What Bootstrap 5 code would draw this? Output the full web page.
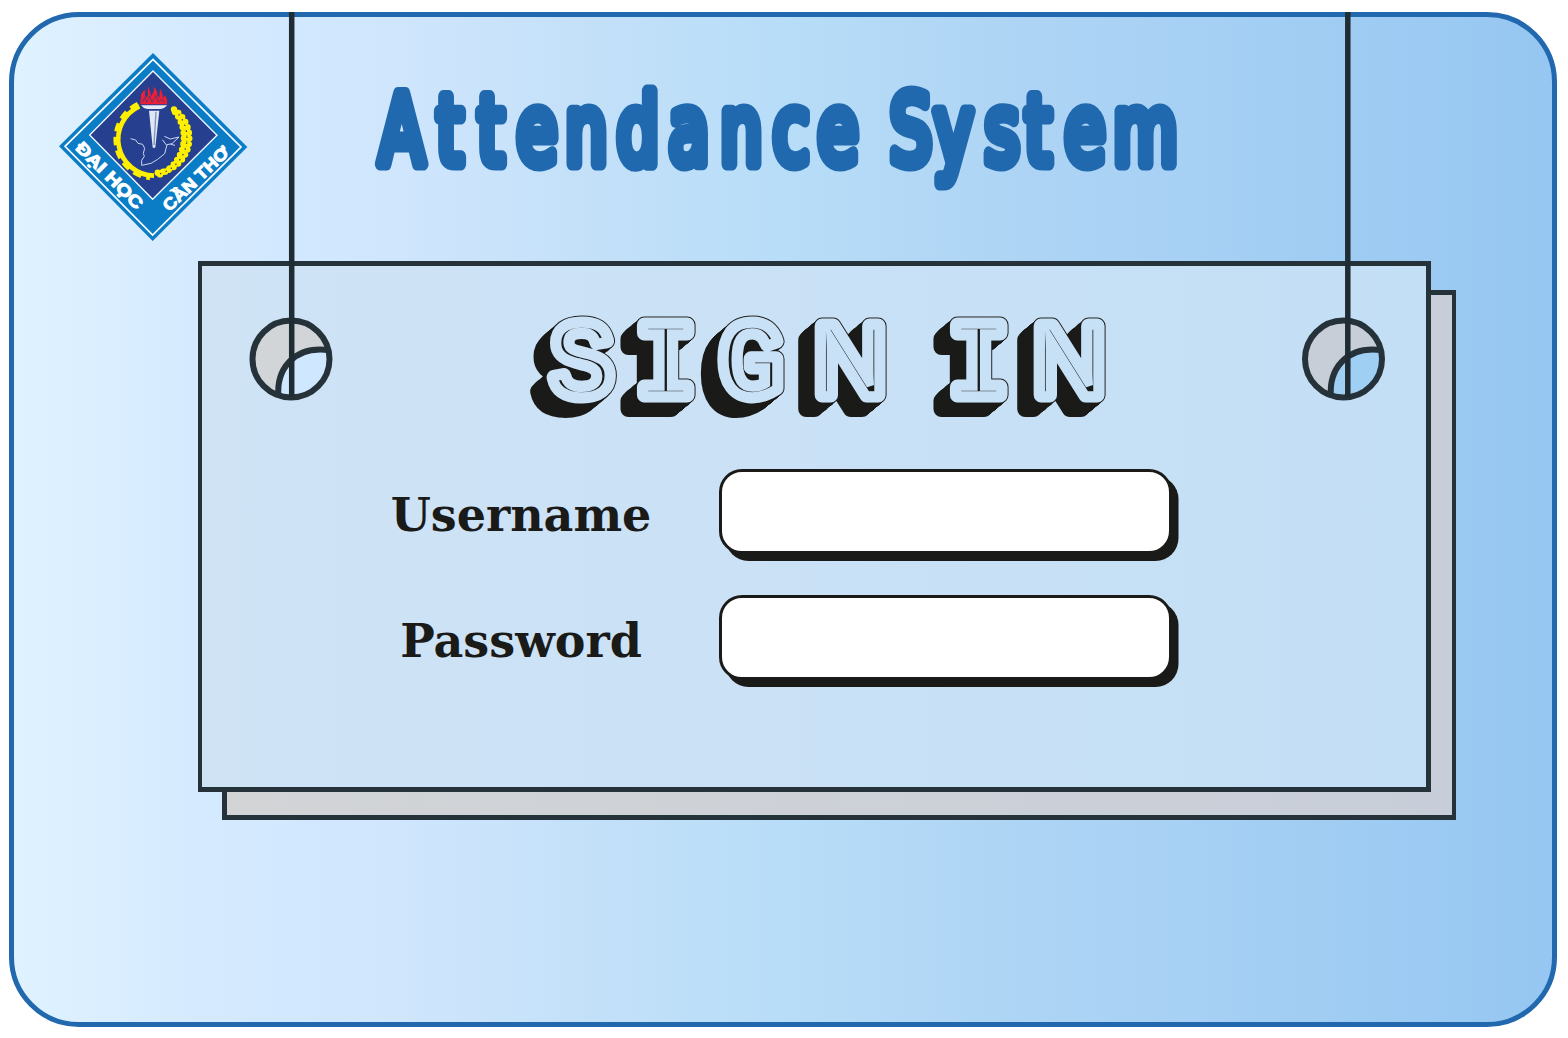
<!DOCTYPE html>
<html lang="en">
<head>
<meta charset="utf-8">
<meta name="viewport" content="width=device-width, initial-scale=1">
<title>Attendance System</title>
<link href="https://cdn.jsdelivr.net/npm/bootstrap@5.3.0/dist/css/bootstrap.min.css" rel="stylesheet">
<style>
  body { background: #fff; overflow: hidden; }
  .screen { width: 1568px; height: 1038px; padding: 12px 11px 11px 9px; }
  .stage {
    height: 1015px; border: 5px solid #2168ae; border-radius: 70px;
    background: linear-gradient(90deg, #dff2ff 0%, #d5eaff 12%, #cfe6fd 25%, #c3e0f9 38%, #b8ddf8 50%, #afd5f5 64%, #a6d0f4 77%, #9ccaf2 92%, #95c7f2 100%);
  }
  .brand-row { height: 244px; }
  .logo { width: 205px; height: 205px; margin: 28px 0 0 36px; }
  .title-art { width: 860px; height: 150px; margin: 53px 0 0 95px; overflow: visible; }
  .board { width: 1233px; height: 531px; margin-left: 184px; padding: 5px 5px 5px 4px; isolation: isolate; }
  .board::before {
    content: ""; position: absolute; z-index: -2; left: 24px; top: 29px; width: 1234px; height: 530px;
    border: 5px solid #26323a; border-right-width: 4px;
    background: linear-gradient(90deg, #d2d4d6, #c8ced9);
  }
  .board::after {
    content: ""; position: absolute; z-index: -1; inset: 0;
    border: 5px solid #26323a; border-left-width: 4px;
    background: linear-gradient(90deg, #cfe3f5, #cae1f6 45%, #c3dff5);
  }
  .ropes { position: absolute; left: 0; top: 0; pointer-events: none; }
  .sign-art { width: 590px; height: 110px; margin: 44px 0 0 324px; overflow: visible; }
  .login-form { margin: 49px 0 0 158px; gap: 41px; }
  .login-form .field-row { height: 85px; gap: 37px; }
  .login-form label { width: 322px; padding-top: 6px; text-align: center; font: bold 46px/1 "DejaVu Serif", serif; color: #1a1a19; }
  .login-form .form-control {
    width: 453px; height: 85px; border: 3px solid #1a1a19; border-radius: 23px;
    background: #fff; box-shadow: 6.5px 7px 0 #1a1a19; font-size: 32px;
  }
</style>
</head>
<body>
<main class="screen position-relative">
  <section class="stage">
    <header class="brand-row d-flex align-items-start">
      <svg class="logo flex-shrink-0" viewBox="0 0 615 615" role="img" aria-label="University emblem">
        <path d="M309 24 592 306 308 588 27 304Z" fill="#0b7dc6"/>
        <path d="M309 43 573 306 308 570 45 304Z" fill="none" stroke="#fff" stroke-width="5"/>
        <path d="M309 78 501 271 308 463 119 270Z" fill="#263f8e" stroke="#f4f8ff" stroke-width="4"/>
        <g fill="none" stroke="#fff000">
          <path d="M268 184A109 109 0 0 0 312 392" stroke-width="14"/>
          <path d="M264 178A116 116 0 0 0 300 398" stroke-width="15" stroke-dasharray="25 16"/>
          <g stroke-linecap="round" stroke-width="19">
            <path d="M372 193A104 104 0 0 1 322 383" stroke-dasharray="0 17"/>
            <path d="M375 201A122 122 0 0 1 318 393" stroke-dasharray="0 17"/>
          </g>
          <path d="M376 203A112 112 0 0 1 326 386" stroke-width="10"/>
          <path d="M386 208A112 112 0 0 1 330 386" stroke="#34406a" stroke-width="4" stroke-dasharray="4 14"/>
        </g>
        <path d="M271 178 273 150Q278 136 287 136 282 148 287 160L294 151 293 122Q302 136 303 155L311 139Q313 132 310 125 322 132 322 151L328 158 330 131Q339 144 338 160L345 151Q353 161 351 178Z" fill="#ed1f35"/>
        <path d="M278 172 284 158 290 172 299 153 306 172 319 152 325 172 335 162 343 174" fill="none" stroke="#263f8e" stroke-width="2"/>
        <path d="M273 181H352Q345 190 332 192H292Q279 190 273 181Z" fill="#e5ecf8"/>
        <path d="M297 197H328L316 307Q312 312 308 307Z" fill="#dfe7f5"/>
        <path d="M318 200 312 300" stroke="#7d95bd" stroke-width="4"/>
        <path d="M242 281 257 285 264 295 278 298 284 310 280 325 283 334 275 346V361L303 355 323 343 344 326 351 299 366 296 387 276 374 279 361 282 343 274M337 284 350 301M362 298 375 301" fill="none" stroke="#c9d8f1" stroke-width="3"/>
        <g fill="#fff" font-family="Liberation Sans, Arial, sans-serif" font-weight="700" font-size="50" stroke="#fff" stroke-width="3">
          <text transform="translate(74 311) rotate(45)" textLength="262" lengthAdjust="spacingAndGlyphs">ĐẠI HỌC</text>
          <text transform="translate(358 502) rotate(-44)" textLength="255" lengthAdjust="spacingAndGlyphs">CẦN THƠ</text>
        </g>
      </svg>
      <h1 class="m-0">
        <svg class="title-art d-block" viewBox="350 70 860 150" role="img" aria-label="Attendance System">
          <text transform="scale(.76 1)" y="164" x="499 575 629 680 744 812 880 948 1017 1076 1140 1171 1229 1296 1349 1401 1465"
            font-family="DejaVu Sans Condensed, DejaVu Sans, sans-serif" font-weight="400" font-stretch="condensed" font-size="96"
            fill="#2069ae" stroke="#2069ae" stroke-width="13" stroke-linejoin="round">Attendance System</text>
        </svg>
      </h1>
    </header>

    <div class="board position-relative">
      <h2 class="m-0">
        <svg class="sign-art d-block" viewBox="526 310 590 110" role="img" aria-label="Sign in">
          <defs>
            <linearGradient id="face" gradientUnits="userSpaceOnUse" x1="526" x2="1116" y1="0" y2="0"><stop stop-color="#cbe2f6"/><stop offset="1" stop-color="#c6e0f6"/></linearGradient>
            <text id="word" y="395" x="550 634 719 814 890 947 1033" font-family="Liberation Mono, monospace" font-size="106">SIG<tspan font-family="Liberation Sans, Arial, sans-serif" font-size="100">N</tspan> I<tspan font-family="Liberation Sans, Arial, sans-serif" font-size="100">N</tspan></text>
            <g id="slab" fill="#1a1a19" stroke="#1a1a19" stroke-width="16" stroke-linejoin="round">
              <use href="#word"/><use href="#word" x="-1" y=".85"/><use href="#word" x="-2" y="1.7"/><use href="#word" x="-3" y="2.5"/>
            </g>
          </defs>
          <use href="#slab" x="-13" y="11"/><use href="#slab" x="-10" y="8.5"/><use href="#slab" x="-7" y="6"/><use href="#slab" x="-4" y="3.5"/><use href="#slab" x="-1" y="1"/>
          <use href="#word" fill="#1a1a19" stroke="#1a1a19" stroke-width="17" stroke-linejoin="round"/>
          <use href="#word" fill="url(#face)" stroke="url(#face)" stroke-width="15" stroke-linejoin="round"/>
          <use href="#word" fill="#1a1a19"/>
          <use href="#word" fill="none" stroke="url(#face)" stroke-width="7.5"/>
        </svg>
      </h2>
      <form class="login-form d-flex flex-column">
        <div class="field-row d-flex align-items-center">
          <label for="username">Username</label>
          <input class="form-control" id="username" type="text">
        </div>
        <div class="field-row d-flex align-items-center">
          <label for="password">Password</label>
          <input class="form-control" id="password" type="password">
        </div>
      </form>
    </div>
  </section>

  <svg class="ropes" width="1568" height="420" aria-hidden="true">
    <defs>
      <g id="cutout">
        <path d="M-13 36C-15 11 2-13 36-9Q44 3 34 20 18 40 0 39Z"/>
        <path d="M-12.500 38C-15 11 2-13 37-9" fill="none" stroke="#26323a" stroke-width="6"/>
        <circle r="38.500" fill="none" stroke="#26323a" stroke-width="6"/>
      </g>
    </defs>
    <circle cx="291" cy="359" r="38.500" fill="#d2d5d8"/>
    <use href="#cutout" x="291" y="359" fill="#d0e8ff"/>
    <circle cx="1343.500" cy="359" r="38.500" fill="#c8ced8"/>
    <use href="#cutout" x="1343.500" y="359" fill="#a0cff4"/>
    <path d="M291.700 12V397M1347.800 12V397" stroke="#202c34" stroke-width="5.500"/>
  </svg>
</main>
<script src="https://cdn.jsdelivr.net/npm/bootstrap@5.3.0/dist/js/bootstrap.bundle.min.js"></script>
</body>
</html>
